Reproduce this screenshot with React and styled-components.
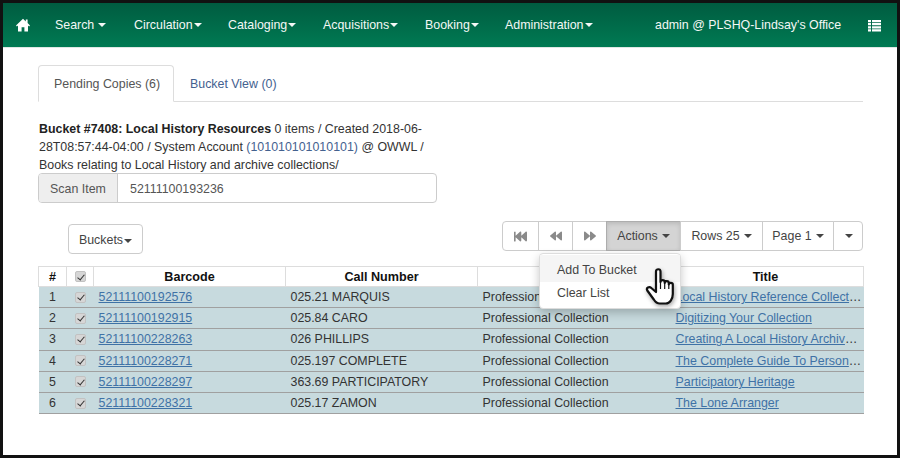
import styled, { createGlobalStyle } from "styled-components";
import { FaFastBackward, FaBackward, FaForward } from "react-icons/fa";

const GlobalStyle = createGlobalStyle`
    html, body {
        margin: 0;
        padding: 0;
        background: #000;
    }

    * {
        box-sizing: border-box;
    }
`

const Frame = styled.div`
    width: 900px;
    height: 458px;
    border: 3px solid #111;
    background: #fff;
    overflow: hidden;
    font-family: "Liberation Sans", Arial, sans-serif;
    font-size: 12.4px;
    color: #333;
`

const NavBar = styled.nav`
    height: 45px;
    display: flex;
    align-items: center;
    background: linear-gradient(to bottom, #005c40, #007a53);
    border-bottom: 1px solid #dfe8e4;
    color: #f4f8f6;
`

const NavItem = styled.a`
    display: flex;
    align-items: center;
    flex: none;
    width: ${(p) => p.$width}px;
    padding-left: ${(p) => p.$pad || 0}px;
    white-space: nowrap;
`

const NavCaret = styled.span`
    display: inline-block;
    width: 0;
    height: 0;
    margin-left: ${(p) => p.$gap || 1}px;
    vertical-align: middle;
    border-top: 4px solid currentColor;
    border-left: 4px solid transparent;
    border-right: 4px solid transparent;
`

const Content = styled.main`
    padding: 17px 34px 0 35px;
`

const TabList = styled.div`
    display: flex;
    height: 37px;
    border-bottom: 1px solid #ddd;
`

const Tab = styled.div`
    height: ${(p) => (p.$active ? 37 : 36)}px;
    width: ${(p) => p.$width}px;
    padding: 11px 15px 0;
    color: ${(p) => (p.$active ? "#555" : "#44618f")};
    background: ${(p) => (p.$active ? "#fff" : "transparent")};
    border: 1px solid ${(p) => (p.$active ? "#ddd" : "transparent")};
    border-bottom-color: ${(p) => (p.$active ? "#fff" : "transparent")};
    border-radius: 4px 4px 0 0;
    white-space: nowrap;
`

const BucketInfo = styled.div`
    margin: 18px 0 0 1px;
    width: 399px;
    height: 53px;
    line-height: 18px;

    b {
        color: #222;
    }

    a {
        color: #44618f;
    }
`

const InputGroup = styled.div`
    display: flex;
    width: 399px;
    height: 30px;
    border: 1px solid #ccc;
    border-radius: 4px;
    overflow: hidden;
`

const InputAddon = styled.div`
    width: 79px;
    padding-top: 8px;
    text-align: center;
    color: #555;
    background: #eee;
    border-right: 1px solid #ccc;
`

const InputValue = styled.div`
    flex: 1;
    padding: 8px 0 0 12px;
    color: #555;
`

const Toolbar = styled.div`
    display: flex;
    justify-content: space-between;
    align-items: flex-start;
    margin-top: 18px;
`

const BucketsButton = styled.div`
    width: 75px;
    height: 30px;
    margin: 3px 0 0 30px;
    padding-top: 8px;
    text-align: center;
    color: #444;
    border: 1px solid #ccc;
    border-radius: 4px;
`

const Pager = styled.div`
    display: flex;
    height: 30px;
`

const PagerButton = styled.div`
    position: relative;
    display: flex;
    align-items: center;
    justify-content: center;
    width: ${(p) => p.$width}px;
    height: 30px;
    margin-left: -1px;
    color: ${(p) => (p.$muted ? "#8a8a8a" : "#444")};
    background: ${(p) => (p.$open ? "#d4d4d4" : "#fff")};
    border: 1px solid ${(p) => (p.$open ? "#adadad" : "#ccc")};
    box-shadow: ${(p) => (p.$open ? "inset 0 2px 4px rgba(0,0,0,.12)" : "none")};
    white-space: nowrap;

    &:first-child {
        border-radius: 4px 0 0 4px;
    }

    &:last-child {
        border-radius: 0 4px 4px 0;
    }
`

const Menu = styled.div`
    position: absolute;
    z-index: 5;
    top: 31px;
    right: -1px;
    width: 142px;
    height: 56px;
    padding-top: 1px;
    background: #fff;
    border: 1px solid #ddd;
    border-radius: 4px;
    box-shadow: 0 4px 10px rgba(0, 0, 0, 0.22);
`

const MenuItem = styled.div`
    height: ${(p) => (p.$hover ? 27 : 24)}px;
    padding: ${(p) => (p.$hover ? 8 : 4)}px 0 0 17px;
    color: #444;
    background: ${(p) => (p.$hover ? "#f5f5f5" : "transparent")};
`

const HandCursor = styled.svg`
    position: absolute;
    left: 105px;
    top: 14px;
    width: 32px;
    height: 38px;
    filter: drop-shadow(1px 2px 2px rgba(0, 0, 0, 0.35));
`

const Table = styled.table`
    width: 825px;
    margin-top: 12px;
    border-collapse: collapse;
    table-layout: fixed;
`

const HeadCell = styled.th`
    height: 20px;
    padding: 0;
    text-align: center;
    font-size: 12.6px;
    color: #111;
    background: #fff;
    border: 1px solid #ddd;
`

const Row = styled.tr`
    height: 21.2px;
    background: #c7dade;
    border-bottom: 1px solid #a0a0a0;
`

const Cell = styled.td`
    padding: 0 ${(p) => (p.$trim ? 1 : 0)}px 0 ${(p) => p.$pad || 0}px;
    text-align: ${(p) => (p.$center ? "center" : "left")};
    color: #333;
    white-space: nowrap;
    overflow: hidden;
    text-overflow: ellipsis;

    a {
        color: #3f72a6;
        text-decoration: underline;
    }
`

const Check = styled.input.attrs({ type: "checkbox", defaultChecked: true })`
    appearance: none;
    position: relative;
    display: block;
    width: 11px;
    height: 11px;
    margin: 0 auto;
    background: #d6d6d6;
    border: 1px solid #c2c2c2;
    border-radius: 2px;

    &::after {
        content: "";
        position: absolute;
        left: 3px;
        top: 0.5px;
        width: 3px;
        height: 6px;
        border: solid #333;
        border-width: 0 1.6px 1.6px 0;
        transform: rotate(40deg);
    }
`

const rows = [
    ["52111100192576", "025.21 MARQUIS", "Local History Reference Collections for Libraries"],
    ["52111100192915", "025.84 CARO", "Digitizing Your Collection"],
    ["52111100228263", "026 PHILLIPS", "Creating A Local History Archive at Your Public Library"],
    ["52111100228271", "025.197 COMPLETE", "The Complete Guide To Personal Digital Archiving"],
    ["52111100228297", "363.69 PARTICIPATORY", "Participatory Heritage"],
    ["52111100228321", "025.17 ZAMON", "The Lone Arranger"],
]

const navItems = [
    ["Search", 79, 4],
    ["Circulation", 94, 1],
    ["Cataloging", 95, 1],
    ["Acquisitions", 102, 1],
    ["Booking", 80, 1],
    ["Administration", 150, 1],
]

export default function App() {
    return (
        <>
            <GlobalStyle />
            <Frame>
                <NavBar>
                    <NavItem $width={52} $pad={13}>
                        <svg width="14" height="14" viewBox="0 0 14 14" fill="#fff">
                            <path d="M7 0.8 0 7.4l.9 1L2 7.4V13.6h3.600V9.200h2.800v4.400H12V7.400l1.100 1 .9-1-2.400-2.300V1.400h-1.800v2L7 .8z" />
                        </svg>
                    </NavItem>
                    {navItems.map(([label, width, gap]) => (
                        <NavItem key={label} $width={width}>
                            {label}
                            <NavCaret $gap={gap} />
                        </NavItem>
                    ))}
                    <NavItem $width={213}>admin @ PLSHQ-Lindsay's Office</NavItem>
                    <NavItem $width={13}>
                        <svg width="13" height="13" viewBox="0 0 13 13" fill="#fff">
                            <path d="M0 1h3v2.200H0zM4 1h9v2.200H4zM0 4.100h3v2.200H0zM4 4.100h9v2.200H4zM0 7.200h3v2.200H0zM4 7.200h9v2.200H4zM0 10.300h3v2.200H0zM4 10.300h9v2.200H4z" />
                        </svg>
                    </NavItem>
                </NavBar>
                <Content>
                    <TabList>
                        <Tab $active $width={136}>Pending Copies (6)</Tab>
                        <Tab $width={116}>Bucket View (0)</Tab>
                    </TabList>
                    <BucketInfo>
                        <b>Bucket #7408: Local History Resources</b> 0 items / Created 2018-06-28T08:57:44-04:00 / System Account <a>(101010101010101)</a> @ OWWL / Books relating to Local History and archive collections/
                    </BucketInfo>
                    <InputGroup>
                        <InputAddon>Scan Item</InputAddon>
                        <InputValue>52111100193236</InputValue>
                    </InputGroup>
                    <Toolbar>
                        <BucketsButton>Buckets<NavCaret /></BucketsButton>
                        <Pager>
                            <PagerButton $width={37} $muted><FaFastBackward size={13} /></PagerButton>
                            <PagerButton $width={35} $muted><FaBackward size={12} /></PagerButton>
                            <PagerButton $width={35} $muted><FaForward size={12} /></PagerButton>
                            <PagerButton $width={75} $open>
                                Actions <NavCaret $gap={4} />
                                <Menu>
                                    <MenuItem $hover>Add To Bucket</MenuItem>
                                    <MenuItem>Clear List</MenuItem>
                                    <HandCursor viewBox="0 0 32 38">
                                        <path
                                            d="M11 3.500c0-3 4.500-3 4.500 0V14c0-2.500 4.200-2.500 4.200 0v1c0-2.500 4.100-2.500 4.100 0v1.500c0-2.300 4-2.300 4 0V26c0 5-3 9.500-7 9.500h-6c-3 0-4.500-1.500-6-4L2.300 22.500c-1.500-2.800 2-4.500 4-2.500L11 24z"
                                            fill="#fff"
                                            stroke="#111"
                                            strokeWidth="2.2"
                                            strokeLinejoin="round"
                                        />
                                        <path d="M15.500 14v7M19.700 15v6M23.800 16.500V21" stroke="#111" strokeWidth="1.2" fill="none" />
                                    </HandCursor>
                                </Menu>
                            </PagerButton>
                            <PagerButton $width={83}>Rows 25 <NavCaret $gap={4} /></PagerButton>
                            <PagerButton $width={72}>Page 1 <NavCaret $gap={4} /></PagerButton>
                            <PagerButton $width={30}><NavCaret /></PagerButton>
                        </Pager>
                    </Toolbar>
                    <Table>
                        <colgroup>
                            <col width="28" />
                            <col width="27" />
                            <col width="192" />
                            <col width="192" />
                            <col width="190" />
                            <col width="196" />
                        </colgroup>
                        <thead>
                            <tr>
                                <HeadCell>#</HeadCell>
                                <HeadCell><Check /></HeadCell>
                                <HeadCell>Barcode</HeadCell>
                                <HeadCell>Call Number</HeadCell>
                                <HeadCell>Location</HeadCell>
                                <HeadCell>Title</HeadCell>
                            </tr>
                        </thead>
                        <tbody>
                            {rows.map(([barcode, call, title], i) => (
                                <Row key={barcode}>
                                    <Cell $center>{i + 1}</Cell>
                                    <Cell $center><Check /></Cell>
                                    <Cell $pad={5}><a>{barcode}</a></Cell>
                                    <Cell $pad={5}>{call}</Cell>
                                    <Cell $pad={5}>Professional Collection</Cell>
                                    <Cell $pad={8} $trim><a>{title}</a></Cell>
                                </Row>
                            ))}
                        </tbody>
                    </Table>
                </Content>
            </Frame>
        </>
    )
}
